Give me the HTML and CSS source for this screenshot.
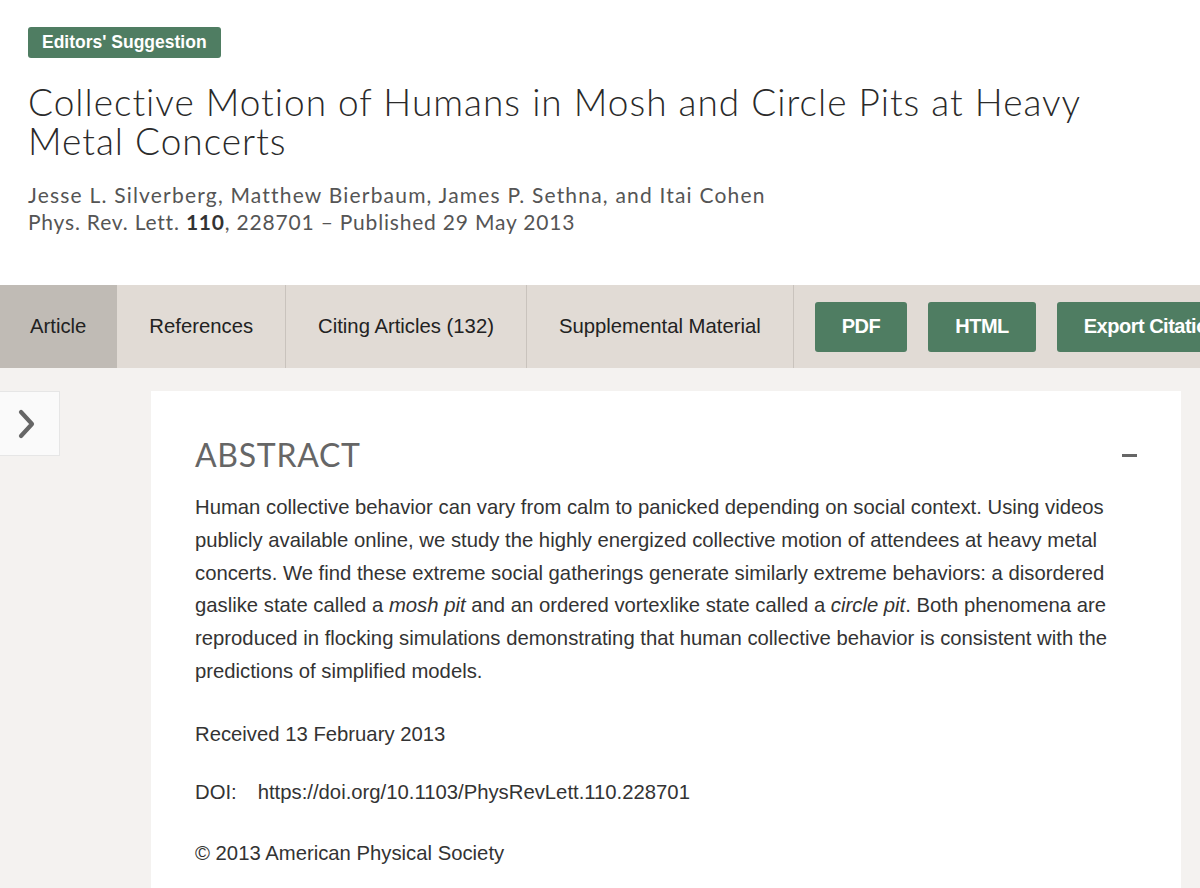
FILE: index.html
```html
<!DOCTYPE html>
<html>
<head>
<meta charset="utf-8">
<link rel="stylesheet" href="styles.css">
</head>
<body>
<header class="head">
  <span class="badge">Editors' Suggestion</span>
  <h1 class="title">Collective Motion of Humans in Mosh and Circle Pits at Heavy Metal Concerts</h1>
  <div class="authors">Jesse L. Silverberg, Matthew Bierbaum, James P. Sethna, and Itai Cohen</div>
  <div class="pub">Phys. Rev. Lett. <b>110</b>, 228701 – Published 29 May 2013</div>
</header>
<nav class="tabs">
  <a class="tab active">Article</a>
  <a class="tab">References</a>
  <a class="tab">Citing Articles (132)</a>
  <a class="tab">Supplemental Material</a>
  <div class="btns">
    <a class="btn">PDF</a>
    <a class="btn">HTML</a>
    <a class="btn">Export Citation</a>
  </div>
</nav>
<main class="body">
  <div class="side">
    <div class="toggle">
      <svg width="18" height="30" viewBox="0 0 18 30"><path d="M3 3 L14 15 L3 27" fill="none" stroke="#666" stroke-width="4.2" stroke-linecap="round" stroke-linejoin="round"/></svg>
    </div>
  </div>
  <section class="card">
    <div class="abs-head">
      <h2 class="abs-title">ABSTRACT</h2>
      <span class="minus"></span>
    </div>
    <p class="abs-text">Human collective behavior can vary from calm to panicked depending on social context. Using videos publicly available online, we study the highly energized collective motion of attendees at heavy metal concerts. We find these extreme social gatherings generate similarly extreme behaviors: a disordered gaslike state called a <i>mosh pit</i> and an ordered vortexlike state called a <i>circle pit</i>. Both phenomena are reproduced in flocking simulations demonstrating that human collective behavior is consistent with the predictions of simplified models.</p>
    <p class="meta">Received 13 February 2013</p>
    <p class="meta doi"><span class="doi-label">DOI:</span><span>https://doi.org/10.1103/PhysRevLett.110.228701</span></p>
    <p class="meta copy">© 2013 American Physical Society</p>
  </section>
</main>
</body>
</html>
```
FILE: styles.css
```css
html, body {
  margin: 0;
  padding: 0;
  background: #fff;
  overflow: hidden;
  width: 1200px;
  height: 888px;
}
body {
  font-family: "Liberation Sans", Arial, sans-serif;
  color: #333;
}
.head {
  padding: 27px 28px 0 28px;
  height: 285px;
  box-sizing: border-box;
}
.badge {
  display: inline-block;
  background: #4f7d62;
  color: #fff;
  font-weight: bold;
  font-size: 17.5px;
  line-height: 31px;
  padding: 0 14px;
  border-radius: 3px;
}
.title {
  font-family: Lato, sans-serif;
  font-weight: 300;
  font-size: 37px;
  line-height: 39px;
  color: #2a2a2a;
  margin: 24px 0 21px 0;
  letter-spacing: 1px;
  max-width: 1100px;
}
.authors, .pub {
  font-family: Lato, sans-serif;
  font-size: 21px;
  line-height: 27px;
  color: #555;
}
.authors { letter-spacing: 1.2px; }
.pub { letter-spacing: 0.8px; }
.pub b { color: #333; }
.tabs {
  display: flex;
  align-items: stretch;
  height: 83px;
  background: #e1dbd5;
  overflow: hidden;
}
.tab {
  display: flex;
  align-items: center;
  padding: 0 32px;
  font-size: 20.3px;
  color: #222;
  border-right: 1px solid #c9c3bd;
  white-space: nowrap;
}
.tab.active {
  background: #c0bbb5;
  padding: 0 31px 0 30px;
  border-right: none;
}
.btns {
  display: flex;
  align-items: center;
  gap: 21px;
  padding-left: 21px;
}
.btn {
  background: #4f7d62;
  color: #fff;
  font-weight: bold;
  font-size: 20px;
  height: 50px;
  display: flex;
  align-items: center;
  padding: 0 27px;
  border-radius: 3px;
  white-space: nowrap;
  letter-spacing: -0.5px;
}
.body {
  display: flex;
  background: #f4f2f0;
  padding-top: 23px;
  height: 520px;
}
.side {
  width: 151px;
  flex: none;
}
.toggle {
  width: 60px;
  height: 65px;
  background: #fafafa;
  border: 1px solid #e6e6e6;
  border-left: none;
  box-sizing: border-box;
  display: flex;
  align-items: center;
  justify-content: center;
  padding-right: 6px;
}
.card {
  width: 1030px;
  background: #fff;
  padding: 44px 44px 0 44px;
  box-sizing: border-box;
}
.abs-head {
  display: flex;
  justify-content: space-between;
  align-items: center;
}
.abs-title {
  font-family: Lato, sans-serif;
  font-weight: 400;
  font-size: 32px;
  color: #666;
  margin: 0;
  line-height: 40px;
  letter-spacing: 0.7px;
}
.minus {
  width: 15px;
  height: 3px;
  background: #666;
}
.abs-text {
  font-size: 20.3px;
  line-height: 32.8px;
  margin: 16px 0 0 0;
}
.meta {
  font-size: 20.3px;
  line-height: 24px;
  margin: 34px 0 0 0;
}
.meta.copy {
  margin-top: 37px;
}
.doi-label {
  margin-right: 21px;
}
```
